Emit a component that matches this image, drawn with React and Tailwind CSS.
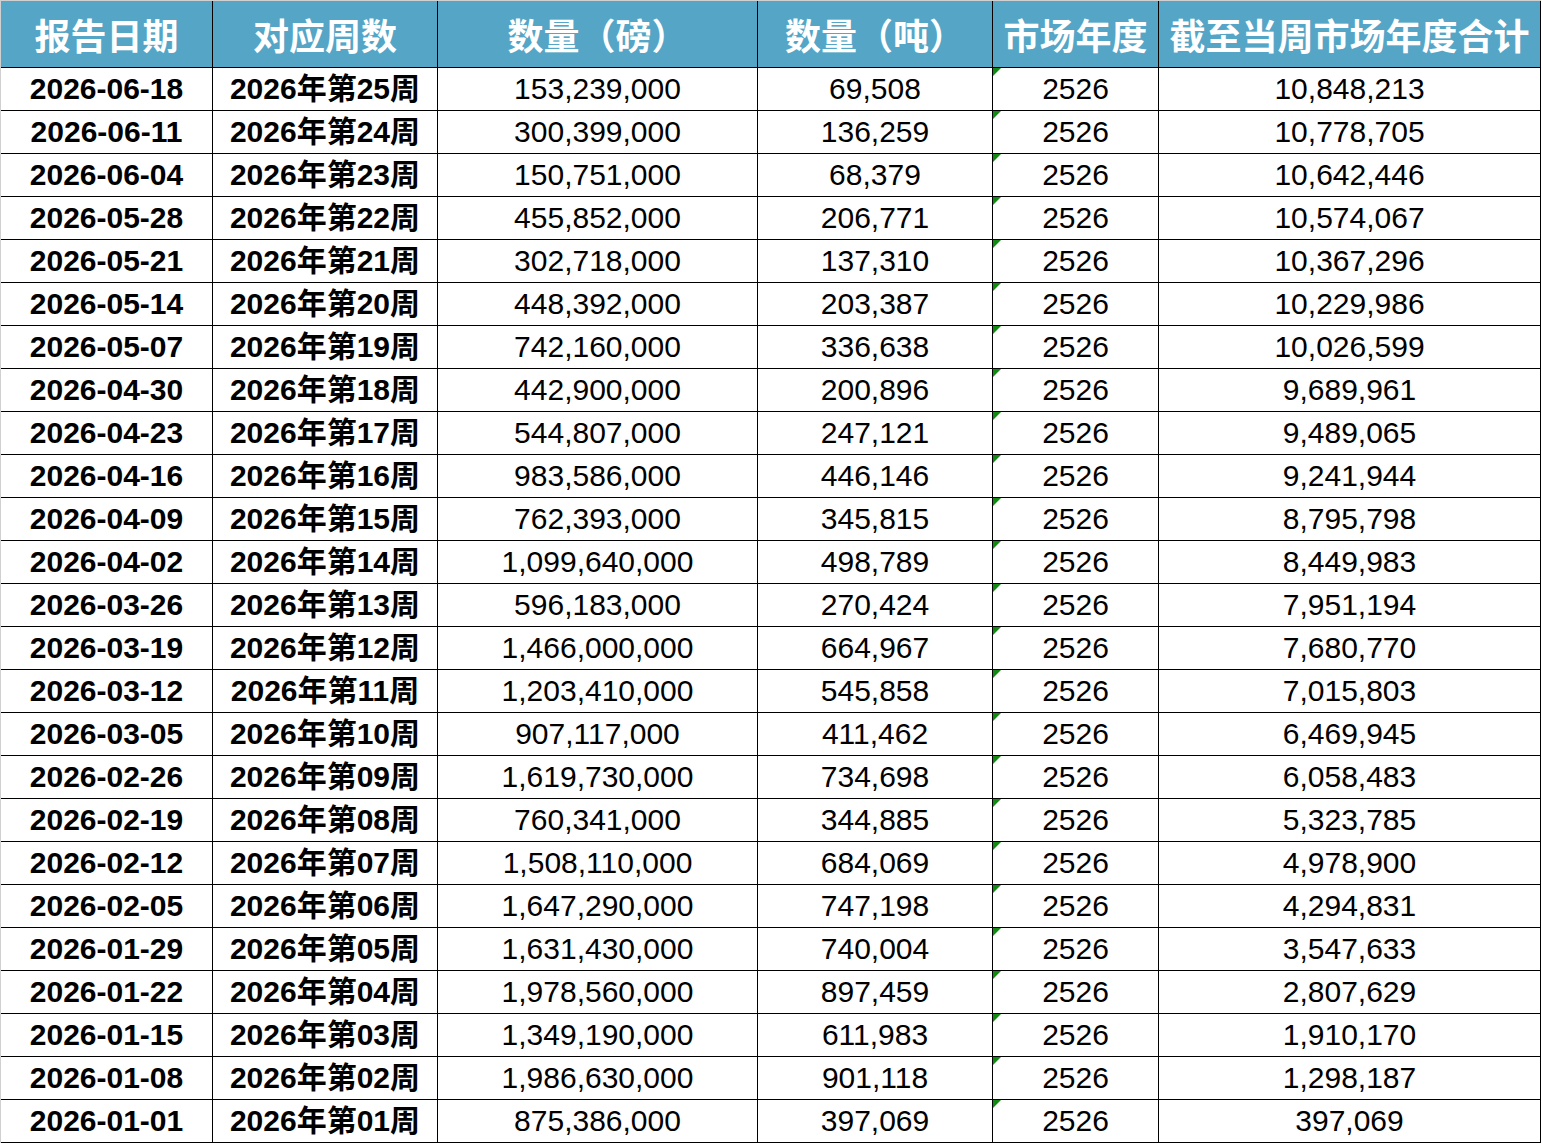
import React from 'react';

// weekly rows: [report date, week no, pounds, tonnes, cumulative]
const ROWS = [
  ['2026-06-18', '25', '153,239,000', '69,508', '10,848,213'],
  ['2026-06-11', '24', '300,399,000', '136,259', '10,778,705'],
  ['2026-06-04', '23', '150,751,000', '68,379', '10,642,446'],
  ['2026-05-28', '22', '455,852,000', '206,771', '10,574,067'],
  ['2026-05-21', '21', '302,718,000', '137,310', '10,367,296'],
  ['2026-05-14', '20', '448,392,000', '203,387', '10,229,986'],
  ['2026-05-07', '19', '742,160,000', '336,638', '10,026,599'],
  ['2026-04-30', '18', '442,900,000', '200,896', '9,689,961'],
  ['2026-04-23', '17', '544,807,000', '247,121', '9,489,065'],
  ['2026-04-16', '16', '983,586,000', '446,146', '9,241,944'],
  ['2026-04-09', '15', '762,393,000', '345,815', '8,795,798'],
  ['2026-04-02', '14', '1,099,640,000', '498,789', '8,449,983'],
  ['2026-03-26', '13', '596,183,000', '270,424', '7,951,194'],
  ['2026-03-19', '12', '1,466,000,000', '664,967', '7,680,770'],
  ['2026-03-12', '11', '1,203,410,000', '545,858', '7,015,803'],
  ['2026-03-05', '10', '907,117,000', '411,462', '6,469,945'],
  ['2026-02-26', '09', '1,619,730,000', '734,698', '6,058,483'],
  ['2026-02-19', '08', '760,341,000', '344,885', '5,323,785'],
  ['2026-02-12', '07', '1,508,110,000', '684,069', '4,978,900'],
  ['2026-02-05', '06', '1,647,290,000', '747,198', '4,294,831'],
  ['2026-01-29', '05', '1,631,430,000', '740,004', '3,547,633'],
  ['2026-01-22', '04', '1,978,560,000', '897,459', '2,807,629'],
  ['2026-01-15', '03', '1,349,190,000', '611,983', '1,910,170'],
  ['2026-01-08', '02', '1,986,630,000', '901,118', '1,298,187'],
  ['2026-01-01', '01', '875,386,000', '397,069', '397,069'],
];

const HEADERS = ['报告日期', '对应周数', '数量（磅）', '数量（吨）', '市场年度', '截至当周市场年度合计'];

const GRID = 'grid grid-cols-[212px_225px_320px_235px_166px_382px]';
const FONT = { fontFamily: '"Liberation Sans", Arial, "Noto Sans CJK SC", sans-serif' };

function Cell({ children, bold, flag }) {
  return (
    <div className={`relative h-[43px] flex items-center justify-center border-r border-b border-black text-[30px] leading-none text-black whitespace-nowrap ${bold ? 'font-bold' : 'font-normal'}`}>
      {flag && (
        <span className="absolute top-0 left-0 w-0 h-0 border-t-[8px] border-t-[#128a12] border-r-[8px] border-r-transparent" />
      )}
      {children}
    </div>
  );
}

export default function App() {
  return (
    <div className="w-[1542px] h-[1143px] bg-white overflow-hidden" style={FONT}>
      <div className="w-[1541px] border-t border-l border-[#d0d0d0]">
        {/* Header */}
        <div className={`${GRID} bg-[#54a5c6]`}>
          {HEADERS.map((h) => (
            <div
              key={h}
              className="h-[67px] flex items-center justify-center border-r border-b border-black text-white text-[36px] font-bold leading-none whitespace-nowrap"
              style={{ fontFamily: '"Noto Sans CJK SC", "Liberation Sans", sans-serif' }}
            >
              {h}
            </div>
          ))}
        </div>

        {/* Body */}
        {ROWS.map(([date, wk, lb, t, total]) => (
          <div key={date} className={GRID}>
            <Cell bold>{date}</Cell>
            <Cell bold>2026年第{wk}周</Cell>
            <Cell>{lb}</Cell>
            <Cell>{t}</Cell>
            <Cell flag>2526</Cell>
            <Cell>{total}</Cell>
          </div>
        ))}
      </div>
    </div>
  );
}
